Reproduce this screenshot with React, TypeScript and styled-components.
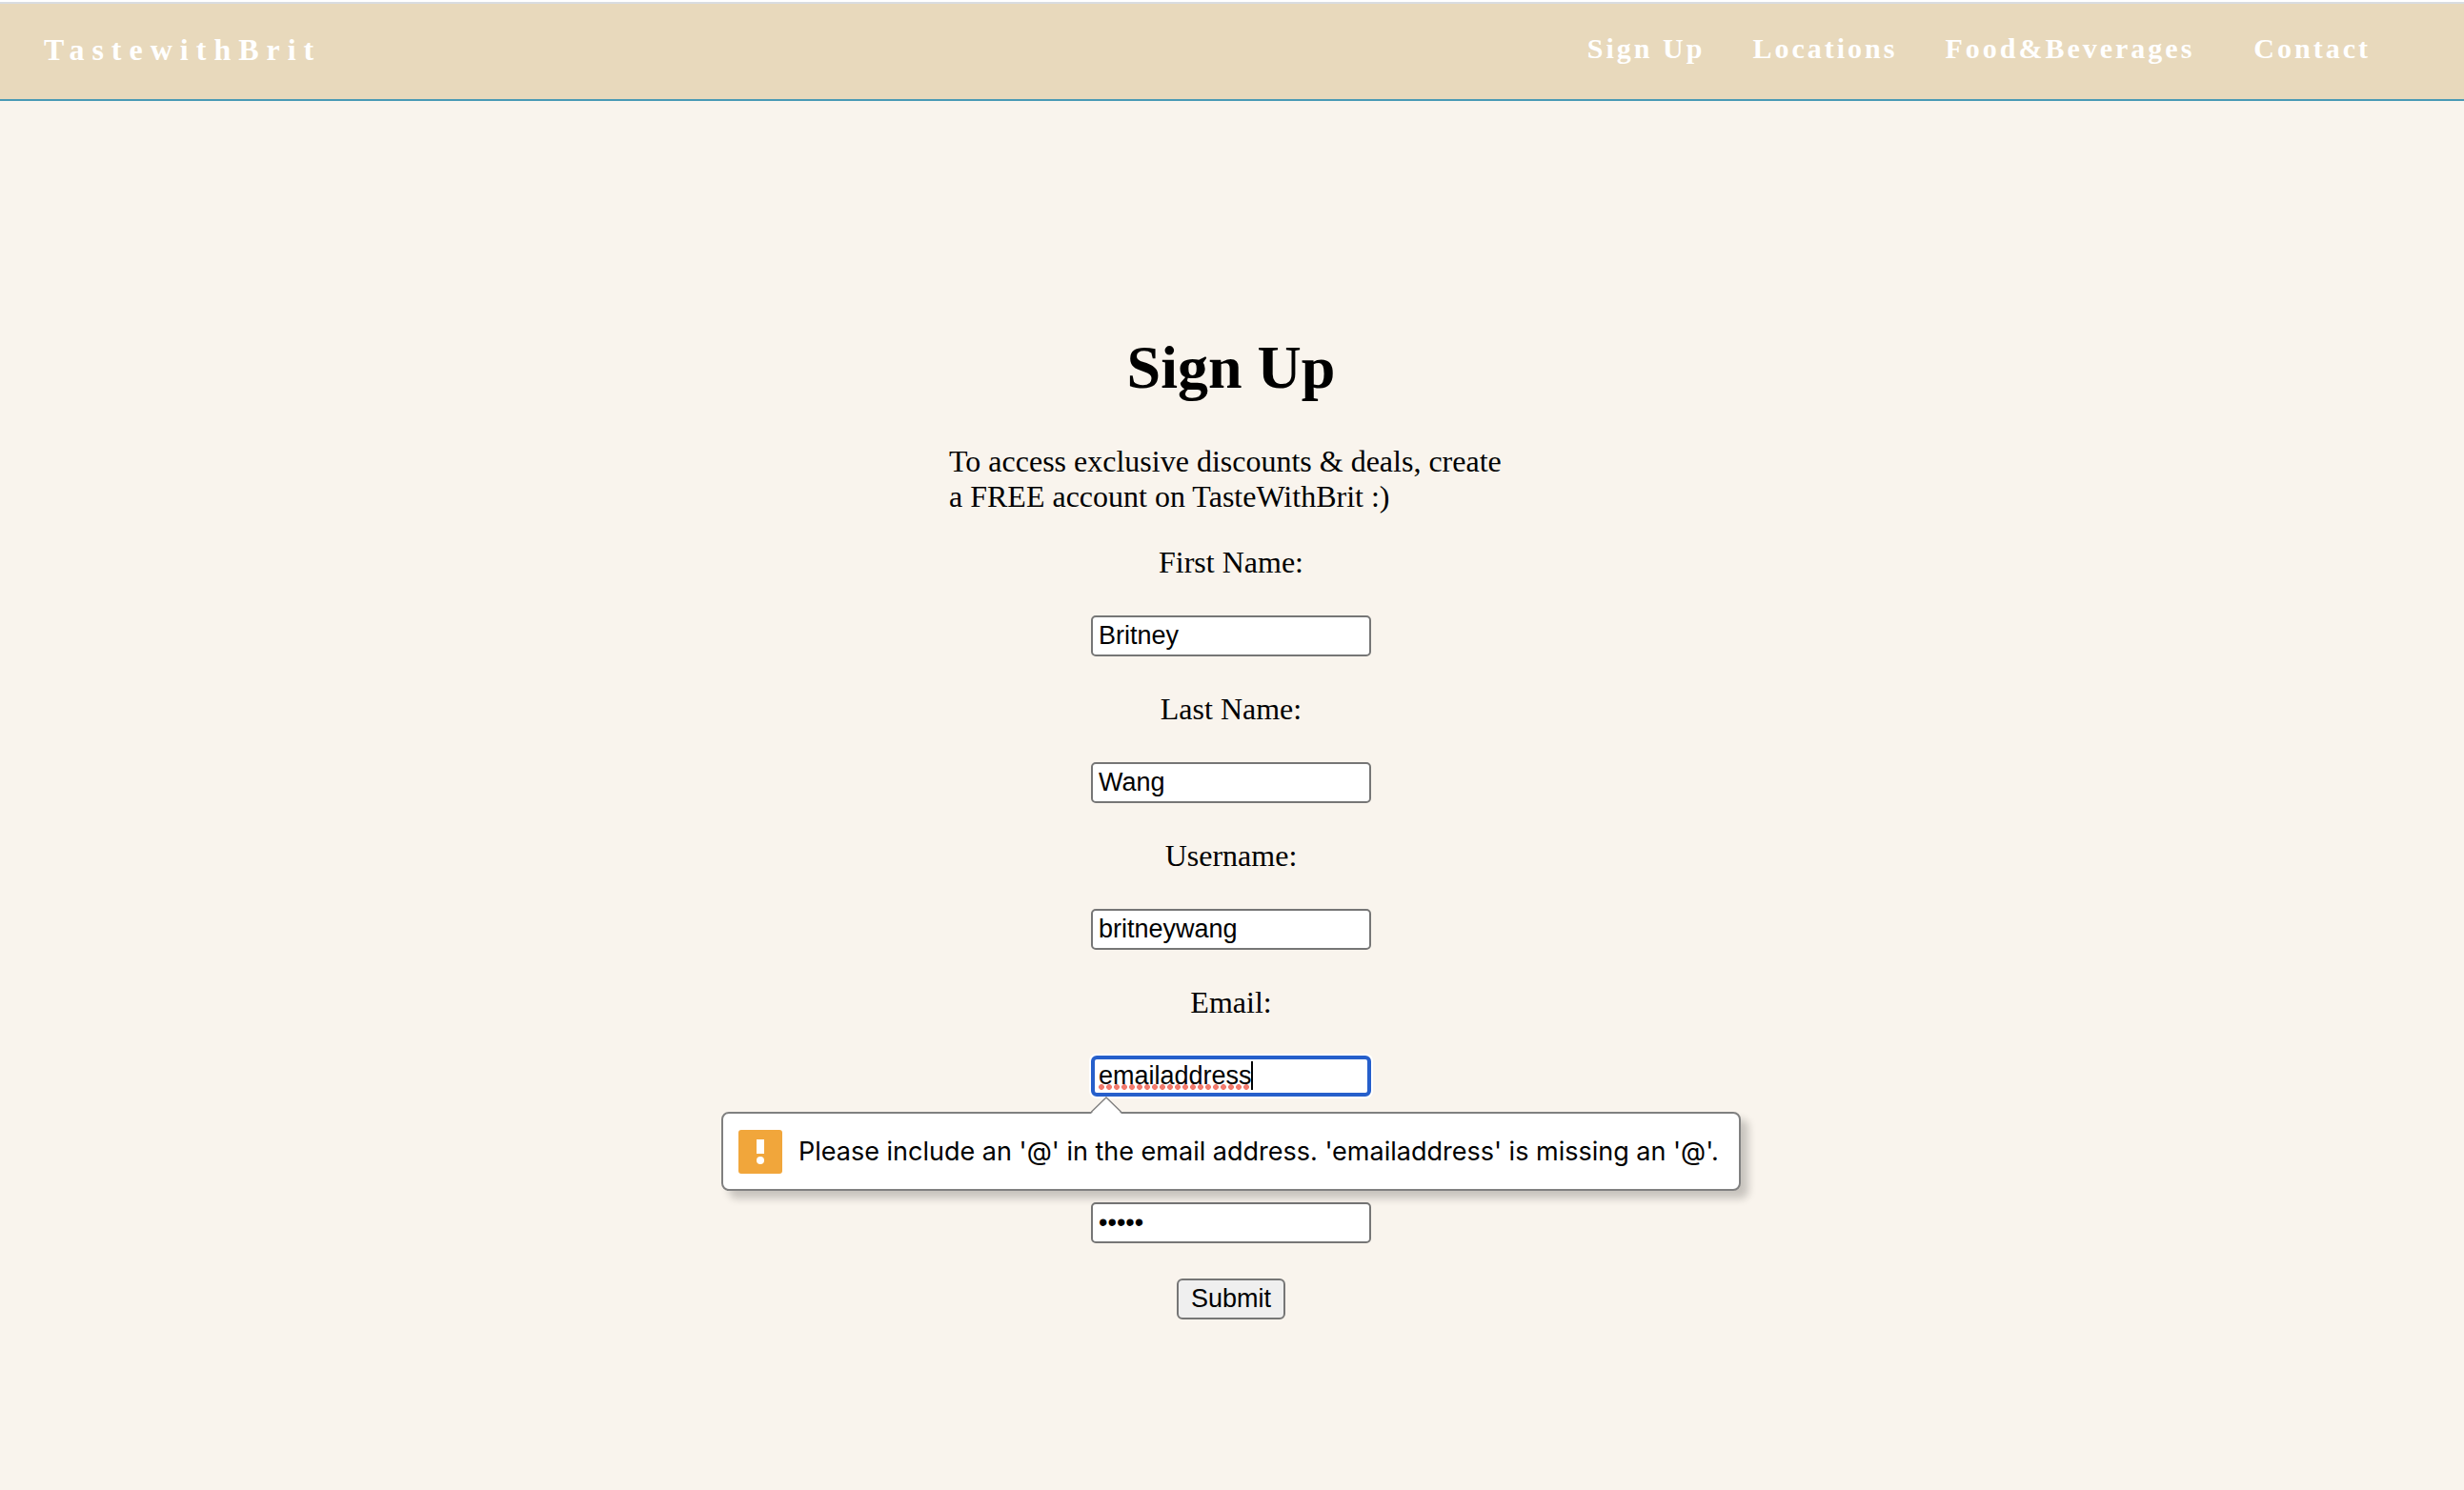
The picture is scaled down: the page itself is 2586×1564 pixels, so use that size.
import React, { useState } from 'react';
import styled, { createGlobalStyle } from 'styled-components';

const serif = `"Liberation Serif", "Times New Roman", Times, serif`;
const sans = `"Liberation Sans", Arial, Helvetica, sans-serif`;

const GlobalStyle = createGlobalStyle`
  *, *::before, *::after { box-sizing: border-box; }
  html { background: #f9f4ed; }
  body {
    margin: 0;
    color: #000;
    font: 32px/37px ${serif};
  }
`;

const Header = styled.header`
  display: flex;
  justify-content: space-between;
  align-items: flex-start;
  height: 106px;
  padding: 32px 98px 0 46px;
  background: #e8d9bc;
  border-top: 2px solid #fff;
  border-bottom: 2px solid #4a9ab5;
  box-shadow: inset 0 2px 0 #d9dde1;
`;

const Brand = styled.a`
  color: #fff;
  font-weight: 700;
  letter-spacing: 8px;
  text-decoration: none;
`;

const Nav = styled.nav`
  display: flex;
  gap: 50px;
`;

const NavLink = styled.a<{ $spaced?: boolean }>`
  padding-left: ${(p) => (p.$spaced ? 12 : 0)}px;
  color: #fff;
  font-size: 30px;
  line-height: 34px;
  font-weight: 700;
  letter-spacing: 3px;
  text-decoration: none;
`;

const Main = styled.main`
  display: flex;
  flex-direction: column;
  align-items: center;
  padding: 243px 26px 64px 24px;
`;

const Title = styled.h1`
  margin: 0 0 43px;
  font-size: 64px;
  line-height: 74px;
`;

const Intro = styled.p`
  width: 100%;
  max-width: 592px;
  margin: 0 0 32px;
`;

const Form = styled.form`
  display: flex;
  flex-direction: column;
  align-items: center;
  gap: 37px;
`;

const Label = styled.label<{ $covered: boolean }>`
  visibility: ${(p) => (p.$covered ? 'hidden' : 'visible')};
`;

const FieldBox = styled.div`
  position: relative;
`;

const Input = styled.input<{ $invalid?: boolean }>`
  display: block;
  width: 294px;
  height: 43px;
  padding: ${(p) => (p.$invalid ? '0 4px' : '0 6px')};
  color: #000;
  font: 27px/31px ${sans};
  background: #fff;
  border: ${(p) => (p.$invalid ? '4px solid #265fcb' : '2px solid #767676')};
  border-radius: ${(p) => (p.$invalid ? 6 : 5)}px;
  box-shadow: ${(p) => (p.$invalid ? '0 0 0 2px #fff' : 'none')};
  outline: none;
  caret-color: transparent;
`;

const Misspelling = styled.span`
  position: absolute;
  top: 30px;
  left: 8px;
  width: 160px;
  height: 6px;
  background: radial-gradient(circle at 3px 3px, #f27a6d 2.6px, transparent 3.2px) 0 0 / 8px 6px repeat-x;
  pointer-events: none;
`;

const Caret = styled.span`
  position: absolute;
  top: 6px;
  left: 168px;
  width: 2px;
  height: 30px;
  background: #000;
`;

const Submit = styled.button`
  width: 114px;
  height: 43px;
  padding: 0;
  color: #000;
  font: 27px/31px ${sans};
  background: #efefef;
  border: 2px solid #767676;
  border-radius: 6px;
`;

const Bubble = styled.div`
  position: absolute;
  z-index: 1;
  top: 59px;
  left: 50%;
  display: flex;
  align-items: center;
  gap: 17px;
  width: 1070px;
  height: 83px;
  padding: 0 16px;
  transform: translateX(-50%);
  color: #000;
  font: 27px/32px Inter, "Noto Sans", sans-serif;
  white-space: nowrap;
  background: #fff;
  border: 2px solid #808080;
  border-radius: 8px;
  box-shadow: 8px 8px 8px rgba(0, 0, 0, 0.2);
`;

const Pointer = styled.svg`
  position: absolute;
  top: -18px;
  left: 386px;
  width: 32px;
  height: 18px;
`;

const WarningIcon = styled.svg`
  flex: none;
  width: 46px;
  height: 46px;
`;

const fields = [
  { id: 'first', label: 'First Name:', type: 'text' },
  { id: 'last', label: 'Last Name:', type: 'text' },
  { id: 'username', label: 'Username:', type: 'text' },
  { id: 'email', label: 'Email:', type: 'email' },
  { id: 'password', label: 'Password:', type: 'password' },
];

const initialValues: Record<string, string> = {
  first: 'Britney',
  last: 'Wang',
  username: 'britneywang',
  email: 'emailaddress',
  password: 'brit1',
};

function ValidationBubble({ value }: { value: string }) {
  return (
    <Bubble role="alert">
      <Pointer viewBox="0 0 32 18" aria-hidden="true">
        <path d="M0 18L16 1.5L32 18Z" fill="#fff" />
        <path d="M0 16.5L16 1L32 16.5" fill="none" stroke="#808080" strokeWidth="1.3" />
      </Pointer>
      <WarningIcon viewBox="0 0 46 46" aria-hidden="true">
        <rect width="46" height="46" rx="3" fill="#f1a63b" />
        <rect x="19" y="10" width="8" height="15" fill="#fff" />
        <circle cx="23" cy="32" r="4" fill="#fff" />
      </WarningIcon>
      <span>{`Please include an '@' in the email address. '${value}' is missing an '@'.`}</span>
    </Bubble>
  );
}

export default function App() {
  const [values, setValues] = useState(initialValues);
  const emailInvalid = !values.email.includes('@');

  return (
    <>
      <GlobalStyle />
      <Header>
        <Brand href="#">TastewithBrit</Brand>
        <Nav>
          <NavLink href="#signup">Sign Up</NavLink>
          <NavLink href="#locations">Locations</NavLink>
          <NavLink href="#menu">Food&amp;Beverages</NavLink>
          <NavLink href="#contact" $spaced>Contact</NavLink>
        </Nav>
      </Header>
      <Main>
        <Title>Sign Up</Title>
        <Intro>To access exclusive discounts &amp; deals, create a FREE account on TasteWithBrit :)</Intro>
        <Form noValidate onSubmit={(e) => e.preventDefault()}>
          {fields.map(({ id, label, type }) => {
            const invalid = id === 'email' && emailInvalid;
            return (
              <React.Fragment key={id}>
                {/* The validation bubble lies over the password label while it is open. */}
                <Label htmlFor={id} $covered={id === 'password' && emailInvalid}>{label}</Label>
                <FieldBox>
                  <Input
                    id={id}
                    name={id}
                    type={type}
                    value={values[id]}
                    $invalid={invalid}
                    onChange={(e) => setValues({ ...values, [id]: e.target.value })}
                  />
                  {invalid && (
                    <>
                      <Misspelling />
                      <Caret />
                      <ValidationBubble value={values.email} />
                    </>
                  )}
                </FieldBox>
              </React.Fragment>
            );
          })}
          <Submit type="submit">Submit</Submit>
        </Form>
      </Main>
    </>
  );
}
